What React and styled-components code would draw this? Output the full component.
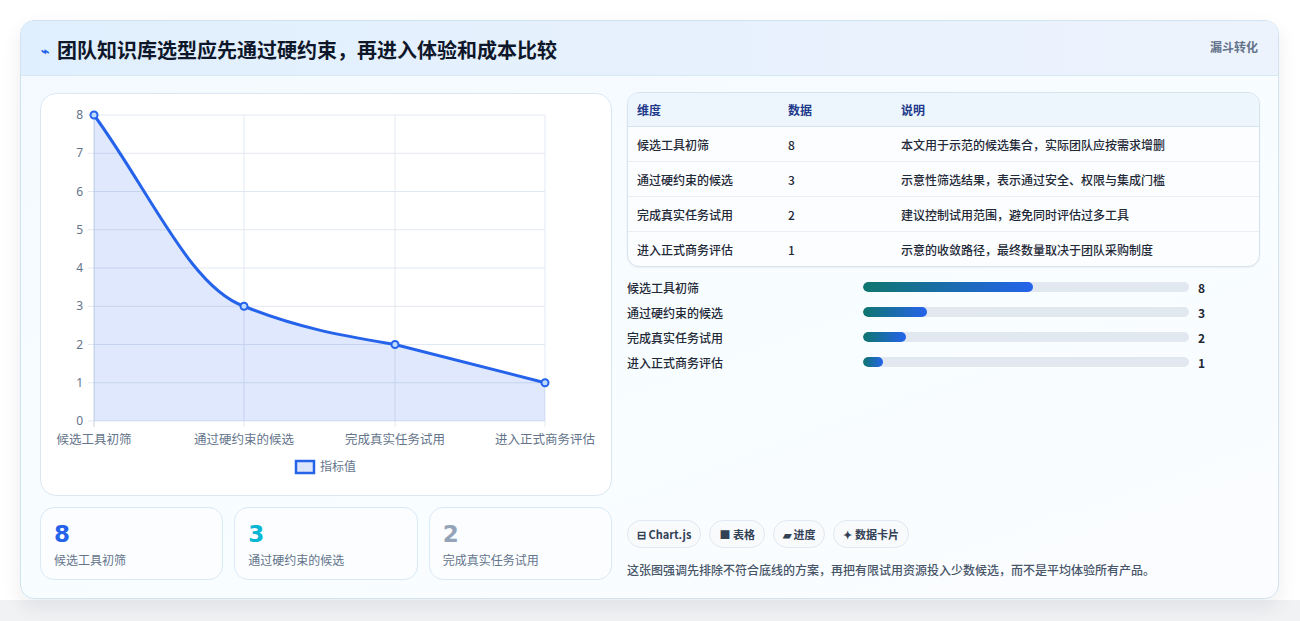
import React from 'react'
import styled, { createGlobalStyle } from 'styled-components'

const GlobalStyle = createGlobalStyle`
  html, body { margin: 0; padding: 0; background: #f3f4f6; }
  body { font-family: "Noto Sans CJK SC", "Noto Sans", sans-serif; }
`

const rows = [
  { name: '候选工具初筛', value: 8, note: '本文用于示范的候选集合，实际团队应按需求增删', pct: 52 },
  { name: '通过硬约束的候选', value: 3, note: '示意性筛选结果，表示通过安全、权限与集成门槛', pct: 19.5 },
  { name: '完成真实任务试用', value: 2, note: '建议控制试用范围，避免同时评估过多工具', pct: 13.3 },
  { name: '进入正式商务评估', value: 1, note: '示意的收敛路径，最终数量取决于团队采购制度', pct: 6.2 }
]

function Chart() {
  const xs = [94, 244, 395, 545]
  const y = (v) => 421 - v * 38.25
  const pts = rows.map((r, i) => [xs[i], y(r.value)])
  const line = `M94,${y(8)} C150,${y(6)} 190,${y(3.5)} 244,${y(3)} C300,${y(2.4)} 350,${y(2.2)} 395,${y(2)} L545,${y(1)}`
  const ox = 40, oy = 93
  return (
    <svg width="572" height="403" viewBox={`${ox} ${oy} 572 403`}>
      {[0, 1, 2, 3, 4, 5, 6, 7, 8].map((v) => (
        <g key={v}>
          <line x1="88" x2="545" y1={y(v)} y2={y(v)} stroke="#e2e8f0" />
          <text x="83" y={y(v) + 4} fontSize="12" fill="#64748b" textAnchor="end" fontFamily="Noto Sans">{v}</text>
        </g>
      ))}
      {xs.map((x, i) => (
        <g key={x}>
          <line x1={x} x2={x} y1="115" y2="427" stroke={i === 0 ? '#cbd5e1' : '#e2e8f0'} />
          <text x={i === 3 ? 545 : x} y="444" fontSize="12.5" fill="#64748b" textAnchor="middle" fontFamily="Noto Sans CJK SC">{rows[i].name}</text>
        </g>
      ))}
      <path d={`${line} L545,421 L94,421 Z`} fill="rgba(37,99,235,0.15)" />
      <path d={line} fill="none" stroke="#2563eb" strokeWidth="3" />
      {pts.map(([px, py]) => (
        <circle key={px} cx={px} cy={py} r="3.5" fill="#bfdbfe" stroke="#2563eb" strokeWidth="2" />
      ))}
      <rect x="296" y="461" width="18" height="12" fill="#dbe5fb" stroke="#2563eb" strokeWidth="2.5" />
      <text x="320" y="471" fontSize="12" fill="#64748b" fontFamily="Noto Sans CJK SC">指标值</text>
    </svg>
  )
}

export default function App() {
  return (
    <>
      <GlobalStyle />
      <Page>
        <Card>
          <Header>
            <Title><Bolt>⌁</Bolt>团队知识库选型应先通过硬约束，再进入体验和成本比较</Title>
            <Tag>漏斗转化</Tag>
          </Header>
          <Body>
            <LeftCol>
              <ChartCard><Chart /></ChartCard>
              <Stats>
                <Stat><StatNum color="#2563eb">8</StatNum><StatLabel>候选工具初筛</StatLabel></Stat>
                <Stat><StatNum color="#06b6d4">3</StatNum><StatLabel>通过硬约束的候选</StatLabel></Stat>
                <Stat><StatNum color="#94a3b8">2</StatNum><StatLabel>完成真实任务试用</StatLabel></Stat>
              </Stats>
            </LeftCol>
            <RightCol>
              <Table>
                <thead>
                  <tr><Th $w={151}>维度</Th><Th $w={113}>数据</Th><Th>说明</Th></tr>
                </thead>
                <tbody>
                  {rows.map((r) => (
                    <tr key={r.name}><Td>{r.name}</Td><Td>{r.value}</Td><Td>{r.note}</Td></tr>
                  ))}
                </tbody>
              </Table>
              <Bars>
                {rows.map((r) => (
                  <BarRow key={r.name}>
                    <BarLabel>{r.name}</BarLabel>
                    <Track><Fill style={{ width: `${r.pct}%` }} /></Track>
                    <BarValue>{r.value}</BarValue>
                  </BarRow>
                ))}
              </Bars>
              <Spacer />
              <Chips>
                <Chip>⊟ Chart.js</Chip>
                <Chip>■ 表格</Chip>
                <Chip>▰ 进度</Chip>
                <Chip>✦ 数据卡片</Chip>
              </Chips>
              <Note>这张图强调先排除不符合底线的方案，再把有限试用资源投入少数候选，而不是平均体验所有产品。</Note>
            </RightCol>
          </Body>
        </Card>
      </Page>
    </>
  )
}

const Page = styled.div`
  width: 1300px;
  height: 621px;
  padding: 20px 21px 0 20px;
  box-sizing: border-box;
  background: linear-gradient(#fff 0, #fff 600px, #f1f2f4 600px);
`

const Card = styled.div`
  height: 579px;
  box-sizing: border-box;
  border: 1px solid #cfe3f1;
  border-radius: 14px;
  background: linear-gradient(160deg, #f4f9ff, #f8fdff 60%, #fbfcff);
  box-shadow: 0 8px 20px rgba(15, 23, 42, 0.08);
  overflow: hidden;
  display: flex;
  flex-direction: column;
`

const Header = styled.div`
  height: 55px;
  flex-shrink: 0;
  box-sizing: border-box;
  display: flex;
  justify-content: space-between;
  align-items: flex-start;
  padding: 14px 20px 0 20px;
  background: linear-gradient(90deg, #e0effd, #edf3fd);
  border-bottom: 1px solid #d6e8f6;
`

const Title = styled.h1`
  margin: 0;
  font-size: 20px;
  font-weight: 700;
  color: #0f172a;
  display: flex;
  align-items: center;
  gap: 8px;
`

const Bolt = styled.span`
  color: #2563eb;
  font-size: 14px;
`

const Tag = styled.span`
  font-size: 12px;
  font-weight: 700;
  color: #64748b;
  margin-top: 3px;
`

const Body = styled.div`
  flex: 1;
  display: flex;
  gap: 16px;
  padding: 17px 19px 17px 19px;
`

const LeftCol = styled.div`
  width: 573px;
  display: flex;
  flex-direction: column;
  gap: 11px;
`

const ChartCard = styled.div`
  height: 403px;
  box-sizing: border-box;
  background: #fff;
  border: 1px solid #dbe7f3;
  border-radius: 16px;
  overflow: hidden;
  svg { display: block; margin: -1px; }
`

const Stats = styled.div`
  display: grid;
  grid-template-columns: repeat(3, 1fr);
  gap: 11px;
`

const Stat = styled.div`
  height: 73px;
  box-sizing: border-box;
  border: 1px solid #d9e9f5;
  border-radius: 14px;
  background: #fbfdff;
  padding: 12px 13px;
`

const StatNum = styled.div`
  font-family: "DejaVu Sans", sans-serif;
  font-size: 23px;
  font-weight: 700;
  line-height: 28px;
  color: ${(p) => p.color};
`

const StatLabel = styled.div`
  font-size: 12px;
  color: #64748b;
  margin-top: 3px;
`

const RightCol = styled.div`
  flex: 1;
  display: flex;
  flex-direction: column;
`

const Table = styled.table`
  width: 633px;
  margin: -1px 0 0 -1px;
  table-layout: fixed;
  border-collapse: separate;
  border-spacing: 0;
  border: 1px solid #d6e2ee;
  border-radius: 12px;
  overflow: hidden;
  background: #fbfdff;
  font-size: 12px;
  box-shadow: 0 1px 2px rgba(0,0,0,0.05);
`

const Th = styled.th`
  text-align: left;
  width: ${(p) => (p.$w ? `${p.$w - 18}px` : 'auto')};
  height: 33px;
  padding: 0 9px;
  font-weight: 700;
  color: #1e3a8a;
  background: #eef6fd;
  border-bottom: 1px solid #d6e2ee;
`

const Td = styled.td`
  height: 34px;
  padding: 0 9px;
  font-weight: 500;
  color: #1f2937;
  white-space: nowrap;
  border-top: 1px solid #e8eef4;
  tr:first-child & { border-top: none; }
`

const Bars = styled.div`
  margin-top: 11px;
  display: flex;
  flex-direction: column;
  gap: 7px;
`

const BarRow = styled.div`
  display: grid;
  grid-template-columns: 236px 326px 1fr;
  align-items: center;
  height: 18px;
  margin-left: -1px;
`

const BarLabel = styled.span`
  font-size: 12px;
  font-weight: 500;
  color: #1f2937;
`

const Track = styled.div`
  height: 10px;
  border-radius: 5px;
  background: #e2e8f0;
  overflow: hidden;
`

const Fill = styled.div`
  height: 100%;
  border-radius: 5px;
  background: linear-gradient(90deg, #0f766e, #2563eb);
`

const BarValue = styled.span`
  font-size: 12px;
  font-weight: 700;
  color: #1f2937;
  padding-left: 9px;
`

const Spacer = styled.div`
  flex: 1;
`

const Chips = styled.div`
  display: flex;
  gap: 8px;
  margin-left: -1px;
`

const Chip = styled.span`
  height: 28px;
  box-sizing: border-box;
  padding: 0 9px;
  display: flex;
  align-items: center;
  border: 1px solid #e2e8f0;
  border-radius: 14px;
  background: #f8fafc;
  font-size: 11px;
  font-weight: 700;
  color: #334155;
`

const Note = styled.p`
  margin: 13px 0 3px -1px;
  font-size: 12px;
  font-weight: 500;
  color: #475569;
`
